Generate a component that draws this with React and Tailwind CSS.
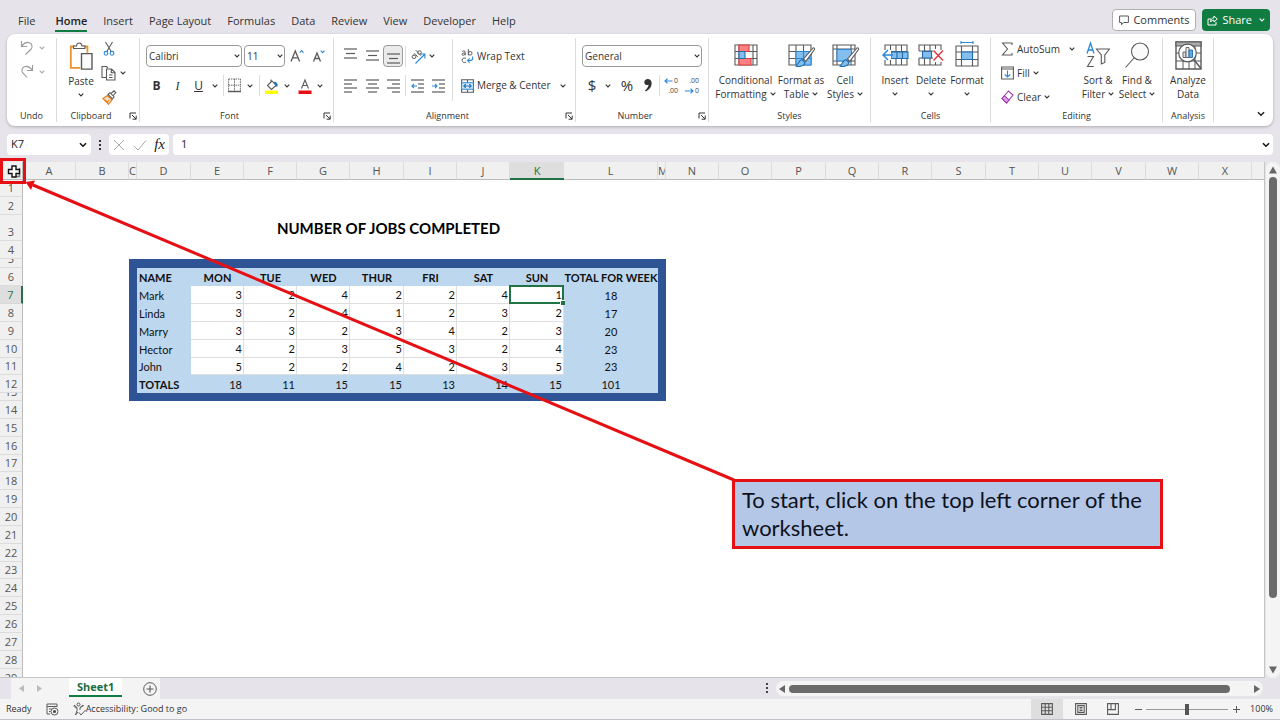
import { useState } from 'react';
import clsx from 'clsx';

const TABS = ['File', 'Home', 'Insert', 'Page Layout', 'Formulas', 'Data', 'Review', 'View', 'Developer', 'Help'];

const COLUMNS = [
  ['A', 53], ['B', 53], ['C', 8], ['D', 54], ['E', 53], ['F', 53], ['G', 53], ['H', 54],
  ['I', 53], ['J', 53], ['K', 54], ['L', 94], ['M', 8], ['N', 53], ['O', 53], ['P', 54],
  ['Q', 53], ['R', 53], ['S', 54], ['T', 53], ['U', 53], ['V', 54], ['W', 53], ['X', 53],
];

const ROW_HEIGHTS = [
  17, 18, 26, 18, 9, 18, 18, 18, 18, 18, 17, 18, 8, 18, 18, 18, 17, 18, 18, 18, 18, 18, 17, 18, 18, 18, 18, 18, 18,
];

const DAYS = ['MON', 'TUE', 'WED', 'THUR', 'FRI', 'SAT', 'SUN'];

const WORKERS = [
  { name: 'Mark', jobs: [3, 2, 4, 2, 2, 4, 1] },
  { name: 'Linda', jobs: [3, 2, 4, 1, 2, 3, 2] },
  { name: 'Marry', jobs: [3, 3, 2, 3, 4, 2, 3] },
  { name: 'Hector', jobs: [4, 2, 3, 5, 3, 2, 4] },
  { name: 'John', jobs: [5, 2, 2, 4, 2, 3, 5] },
];

const sum = (list) => list.reduce((a, b) => a + b, 0);

/* ---------- icons ---------- */

function Svg({ w = 16, h = 16, children, className }) {
  return (
    <svg width={w} height={h} viewBox={`0 0 ${w} ${h}`} fill="none" stroke="#5a5a5a" strokeWidth="1.1" aria-hidden="true" className={clsx('shrink-0', className)}>
      {children}
    </svg>
  );
}

function Chevron({ size = 6, color = '#333', width = 1.1 }) {
  return (
    <svg width={size} height={size} viewBox="0 0 6 6" fill="none" stroke={color} strokeWidth={width} aria-hidden="true" className="shrink-0">
      <path d="M0.7 1.7 3 4 5.3 1.7" />
    </svg>
  );
}

const UndoIcon = () => (
  <Svg className="opacity-60"><path d="M2.5 1v5.5H8M2.8 6.2C5 3 8 1.8 10.5 2.8c3 1.2 3.3 4.6 1.2 6.7L6.5 14.5" /></Svg>
);

const RedoIcon = () => (
  <Svg className="opacity-60"><path d="M13.5 1v5.5H8M13.2 6.2C11 3 8 1.8 5.5 2.8c-3 1.2-3.3 4.6-1.2 6.7L8 13.5" /></Svg>
);

const PasteIcon = () => (
  <Svg w={24} h={28}>
    <path d="M6 4.5H1.8v21.3h9.5M14 4.5h4.4v6.3" stroke="#e8912d" strokeWidth="1.8" />
    <path d="M4.5 6.5V4h3c.3-4 5-4 5.4 0h3v2.5z" fill="#fff" />
    <path d="M12.5 11.6h10.500v15.500H12.500z" fill="#fafafa" strokeWidth="1.400" />
  </Svg>
);

const CutIcon = () => (
  <Svg w={12} h={16}>
    <path d="M2.500 1l6 10M9.500 1l-6 10" />
    <circle cx="3" cy="12.300" r="1.900" stroke="#2b88d8" />
    <circle cx="9" cy="12.300" r="1.900" stroke="#2b88d8" />
  </Svg>
);

const CopyIcon = () => (
  <Svg w={15} h={16}>
    <path d="M5 12.500H1V1.500h4.500l1.500 1.500" />
    <path d="M5.500 4h5l3.500 3.500V15H5.500zM10.300 4v3.700H14M8 10h3.500M8 12.500h3.500" />
  </Svg>
);

const BrushIcon = () => (
  <Svg w={15} h={15}>
    <path d="M1 8.500l4.500-3 4.500 4.500-3.500 4.300z" fill="#fbe0bf" stroke="#e07b1a" />
    <path d="M3 10l2 2M5 13l2-3" stroke="#e07b1a" />
    <path d="M6 4.500l2-1.800 4 4L10.500 9zM9 3.500l3-2.700 1.800 1.700L11.300 5.500" />
  </Svg>
);

const LauncherIcon = () => (
  <Svg w={8} h={8}><path d="M7 1H1v5.500M3 3l4 4M7.200 3.600v3.600H3.600" strokeWidth="1" stroke="#333" /></Svg>
);

const GrowFontIcon = () => (
  <Svg w={15} h={16}>
    <path d="M1 13.500L5.300 3l4.300 10.500M2.600 9.800h5.400" strokeWidth="1.300" />
    <path d="M9.700 4.600L11.600 2.600l1.900 2" stroke="#2b88d8" />
  </Svg>
);

const ShrinkFontIcon = () => (
  <Svg w={15} h={16}>
    <path d="M1.500 13.500L5 5l3.500 8.500M2.800 10.500h4.400" strokeWidth="1.300" />
    <path d="M8.700 2.600L10.600 4.600l1.900-2" stroke="#2b88d8" />
  </Svg>
);

const BordersIcon = () => (
  <Svg w={13} h={15}>
    <path d="M.6 1h12M.6 1v12M12.400 1v12M6.500 1v12M.6 7.200h12" strokeWidth=".9" strokeDasharray="1.500 .8" />
    <path d="M0 13.500h13" strokeWidth="1.500" />
  </Svg>
);

const FillColorIcon = () => (
  <Svg w={14} h={16}>
    <path d="M6 1.500v3M2.500 7.500L7 3l4 4.500L6.500 11.500z" />
    <path d="M9 4.500c2 0 3 1.500 2.800 4" stroke="#1f6fb2" strokeWidth="1.700" />
    <path d="M0 12.500h13V16H0z" fill="#ffff00" stroke="none" />
  </Svg>
);

const FontColorIcon = () => (
  <Svg w={14} h={16}>
    <path d="M3.500 10.500L7 2l3.500 8.500M4.700 7.500h4.600" />
    <path d="M.5 12.500h13V16H.5z" fill="#e60f14" stroke="none" />
  </Svg>
);

/* horizontal bars, each one [x1, x2, y] */
function Bars({ lines, w = 13, h = 14, children }) {
  return (
    <Svg w={w} h={h}>
      {lines.map(([a, b, y]) => <path key={y} d={`M${a} ${y}H${b}`} strokeWidth="1.200" />)}
      {children}
    </Svg>
  );
}

const OrientationIcon = () => (
  <Svg w={15} h={15}>
    <path d="M4.500 14.500L13.500 5.500M9.500 5h4.400v4.400" stroke="#2b88d8" />
    <ellipse cx="3" cy="7.800" rx="1.900" ry="1.700" strokeWidth="1" />
    <path d="M2.500 5.200c1-.8 1.600-.3 2.300.5l2 2.200M4.800 1.200l5 5.500" strokeWidth="1" />
    <ellipse cx="8.500" cy="3.500" rx="1.800" ry="1.800" strokeWidth="1" />
  </Svg>
);

const WrapIcon = () => (
  <Svg w={13} h={16}>
    <path d="M1.200 3.500c1.500-1 3-.7 3 .8v3M4.200 5c-2 0-3.200.3-3.200 1.300 0 1.300 2.500 1.200 3.200-.3M7.300 1v6.300" strokeWidth="1" />
    <circle cx="9.200" cy="5.300" r="1.800" strokeWidth="1" />
    <path d="M5 10.300c-2.500-1-3.800.3-3.800 2s1.500 2.900 3.800 1.900" strokeWidth="1" />
    <path d="M11.500 8.500c1 3-.5 4.300-4.500 4M8.700 10.300L6.500 12.500l2.200 2.200" stroke="#2b88d8" />
  </Svg>
);

const MergeIcon = () => (
  <Svg w={13} h={14}>
    <path d="M.6.700h11.800v12.600H.6zM6.500.7v3M6.500 10.500v3" />
    <path d="M.6 3.700h11.800v6.600H.6z" fill="#d5eafa" stroke="#2b88d8" />
    <path d="M3 7h7M4.700 5.200L2.800 7l1.900 1.800M8.300 5.200L10.200 7 8.300 8.800" stroke="#1f6fb2" />
  </Svg>
);

function DecimalIcon({ increase }) {
  return (
    <span className="relative flex h-5 w-[14px] flex-col items-end text-[7px] leading-[10px] text-[#444]">
      <span>{increase ? '0' : '.00'}</span>
      <span>{increase ? '.00' : '0'}</span>
      <svg width="9" height="6" viewBox="0 0 9 6" fill="none" stroke="#2b88d8" strokeWidth="1.200" className={clsx('absolute left-0', increase ? 'top-[2px]' : 'bottom-[2px]')} aria-hidden="true">
        <path d={increase ? 'M8.500 3H1M3.500.6L1 3l2.500 2.400' : 'M0 3h8M5.500.6L8 3 5.500 5.400'} />
      </svg>
    </span>
  );
}

const GRID_24 = 'M1 1h22v20H1zM1 7.500h22M1 14h22M6.500 1v20M12 1v20M17.500 1v20';

const PaintTip = () => (
  <g>
    <path d="M25 7L15.500 18l2.300 2.300L26.500 8.500c.5-1.200-.7-2.200-1.500-1.500z" fill="#fff" />
    <path d="M7.500 25c2.500 0 2.500-5.500 6.500-6.500l3 3c-.5 3.500-5.500 4.800-9.500 3.500z" fill="#83beec" stroke="#1f6fb2" />
  </g>
);

const ConditionalIcon = () => (
  <Svg w={24} h={28}>
    <path d="M1 4h22v20H1zM1 10.500h22M1 17.500h22M5 4v20M19 4v20" />
    <path d="M5 4h10v6.500H5zM5 17.500h12V24H5z" fill="#ff8083" stroke="#e03c40" />
    <path d="M5 10.500h6v7H5z" fill="#83beec" stroke="#1f6fb2" />
  </Svg>
);

const FormatTableIcon = () => (
  <Svg w={27} h={28}>
    <path d="M1 4h22v20H1zM1 10.500h22M1 17.500h22M8 4v20M15.500 4v20" />
    <path d="M8 10.500h15V24H8z" fill="#83beec" stroke="#2b88d8" strokeWidth="1" />
    <path d="M8 17.500h15M15.500 10.500V24" stroke="#2b88d8" />
    <PaintTip />
  </Svg>
);

const CellStylesIcon = () => (
  <Svg w={27} h={28}>
    <path d="M1 4h22v20H1zM1 8h22M1 20h22M5 4v20M19 4v20" />
    <path d="M5 8.500h14.500V20H5z" fill="#83beec" stroke="#2b88d8" />
    <PaintTip />
  </Svg>
);

const InsertCellsIcon = () => (
  <Svg w={27} h={28}>
    <g transform="translate(2 3)"><path d={GRID_24} /></g>
    <path d="M9 11h17v6.500H9z" fill="#83beec" stroke="#1f6fb2" />
    <path d="M15 11v6.500M20.500 11v6.500" stroke="#1f6fb2" />
    <path d="M0 9h9v10H0z" fill="#fff" stroke="none" />
    <path d="M11 14H1M6 9l-5 5 5 5" stroke="#2b88d8" strokeWidth="1.500" />
  </Svg>
);

const DeleteCellsIcon = () => (
  <Svg w={26} h={28}>
    <g transform="translate(0 3)"><path d="M1 7V1h22v5M1 7h14M1 14v7h22v-3M1 14h14M6.500 1v6M12 1v6M17.500 1v4M6.500 14v7M12 14v7M17.500 18v3" /></g>
    <path d="M4.500 10.500h9V17h-9z" fill="#83beec" stroke="#1f6fb2" />
    <path d="M15.500 9.500l9.500 10M25 9.500l-9.500 10" stroke="#e8363b" strokeWidth="1.400" />
  </Svg>
);

const FormatCellsIcon = () => (
  <Svg w={24} h={28}>
    <path d="M1 5h22v20H1zM1 11h22M1 18.500h22M6.500 5v20M17.500 5v20" />
    <path d="M6.500 11h11v7.500h-11z" fill="#83beec" stroke="#1f6fb2" />
    <path d="M6 1.500h12M6 0v3M18 0v3" stroke="#2b88d8" />
  </Svg>
);

const SigmaIcon = () => (
  <Svg w={12} h={14}><path d="M11 3V1H1.500l5 6-5 6H11v-2" /></Svg>
);

const FillIcon = () => (
  <Svg w={13} h={14}>
    <path d="M.6 1h11.800v12H.6zM.6 3h11.800" />
    <path d="M6.500 4.500v6.500M3.800 8.500L6.500 11l2.700-2.500" stroke="#2b88d8" />
  </Svg>
);

const ClearIcon = () => (
  <Svg w={13} h={14}>
    <path d="M1 8.500L7.500 1l4.500 4L5.500 13z" fill="#fff" stroke="#a23bb0" />
    <path d="M1 8.500L3.500 5.700 8 10l-2.500 3z" fill="#dca5e4" stroke="#a23bb0" />
  </Svg>
);

const SortIcon = () => (
  <Svg w={24} h={28}>
    <path d="M1 12.500L4.500 2 8 12.500M2.200 9h4.600" stroke="#2b88d8" strokeWidth="1.300" />
    <path d="M1.500 15.500h6L1.500 25.500h6.300" />
    <path d="M10.500 8h13l-4.700 6v7.500l-3.500 1.500V14z" />
  </Svg>
);

const FindIcon = () => (
  <Svg w={26} h={28}><circle cx="16" cy="10.500" r="8.500" fill="#fafafa" /><path d="M10 17L1.500 26.500" /></Svg>
);

const AnalyzeIcon = () => (
  <Svg w={27} h={29}>
    <path d="M1 1h25v27H1z" strokeWidth="1.400" />
    <path d="M1 1h25v4H1z" fill="#aaa" />
    <path d="M1 12h25M1 20h25M8 5v23M14 5v23M20 5v23" strokeWidth="1" />
    <circle cx="12.500" cy="12" r="8.800" fill="#fff" strokeWidth="1.200" />
    <path d="M18.700 18.500l7.300 9" strokeWidth="1.500" />
    <path d="M8 11h3v5.500H8z" fill="#ddd" strokeWidth=".9" />
    <path d="M11 6.500h3v10h-3z" fill="#eee" strokeWidth=".9" />
    <path d="M14 9h3.500v7.500H14z" fill="#5aa9e6" stroke="#1f6fb2" strokeWidth=".9" />
  </Svg>
);

/* ---------- ribbon pieces ---------- */

function IconButton({ label, className, children }) {
  return (
    <button type="button" aria-label={label} className={clsx('flex shrink-0 items-center justify-center', className)}>
      {children}
    </button>
  );
}

function Separator({ className }) {
  return <span className={clsx('w-px shrink-0 bg-[#dcdcdc]', className ?? 'h-[21px]')} />;
}

function Group({ title, width, launcher, children }) {
  return (
    <section aria-label={title} className={clsx('flex shrink-0 flex-col border-r border-[#dcdcdc]', width)}>
      <div className="h-[74px]">{children}</div>
      <div className={clsx('relative text-center text-[9px] leading-3', launcher && 'pr-[14px]')}>
        {title}
        {launcher && (
          <button type="button" aria-label={`${title} settings`} className="absolute right-0.5 top-0.5"><LauncherIcon /></button>
        )}
      </div>
    </section>
  );
}

function RibbonSelect({ label, value, width }) {
  return (
    <span className={clsx('relative block h-[22px] shrink-0', width)}>
      <select aria-label={label} defaultValue={value} className="size-full appearance-none rounded border border-[#9a9a9a] bg-white pl-[2px] text-[10px] text-[#333]">
        <option>{value}</option>
      </select>
      <span className="pointer-events-none absolute right-[2px] top-2"><Chevron /></span>
    </span>
  );
}

function BigButton({ icon, lines, width, chevron }) {
  return (
    <button type="button" className={clsx('flex shrink-0 flex-col items-center pt-[3px]', width)}>
      <span className="flex h-7 items-center">{icon}</span>
      <span className="mt-1 whitespace-nowrap leading-[14px]">
        {lines[0]}
        <span className="flex h-[14px] items-center justify-center gap-[3px]">
          {lines[1]}
          {chevron && <Chevron />}
        </span>
      </span>
    </button>
  );
}

function Ribbon() {
  return (
    <div className="mx-[7px] flex h-[92px] shrink-0 rounded-lg bg-white py-1 text-[10px] text-[#333] shadow-[0_1px_3px_rgba(0,0,0,0.25)]">
      <Group title="Undo" width="w-[50px]">
        <div className="flex flex-col gap-2 pl-3 pt-[2px]">
          <IconButton label="Undo" className="h-4 gap-1 self-start"><UndoIcon /><Chevron color="#aaa" /></IconButton>
          <IconButton label="Redo" className="h-4 gap-1 self-start"><RedoIcon /><Chevron color="#aaa" /></IconButton>
        </div>
      </Group>

      <Group title="Clipboard" width="w-[83px]" launcher>
        <div className="flex gap-1 pl-2">
          <button type="button" className="flex w-8 flex-col items-center pt-1">
            <PasteIcon />
            <span className="my-1 leading-[14px]">Paste</span>
            <Chevron />
          </button>
          <div className="flex flex-col gap-2 pt-[3px]">
            <IconButton label="Cut" className="h-4 w-4"><CutIcon /></IconButton>
            <IconButton label="Copy" className="h-4 gap-1"><CopyIcon /><Chevron /></IconButton>
            <IconButton label="Format Painter" className="h-4 w-4"><BrushIcon /></IconButton>
          </div>
        </div>
      </Group>

      <Group title="Font" width="w-[194px]" launcher>
        <div className="flex flex-col gap-2 pl-[6px] pt-[7px]">
          <div className="flex items-center gap-[2px]">
            <RibbonSelect label="Font" value="Calibri" width="w-[96px]" />
            <RibbonSelect label="Font size" value="11" width="w-[41px]" />
            <IconButton label="Increase font size" className="w-5"><GrowFontIcon /></IconButton>
            <IconButton label="Decrease font size" className="w-5"><ShrinkFontIcon /></IconButton>
          </div>
          <div className="flex h-[21px] items-center text-[12px]">
            <IconButton label="Bold" className="w-[21px] font-bold">B</IconButton>
            <IconButton label="Italic" className="w-[21px] font-['Liberation_Serif'] italic">I</IconButton>
            <IconButton label="Underline" className="w-[21px] underline">U</IconButton>
            <IconButton label="Underline style" className="w-[11px]"><Chevron /></IconButton>
            <Separator className="mx-[3px] h-[21px]" />
            <IconButton label="Borders" className="w-[15px]"><BordersIcon /></IconButton>
            <IconButton label="Border style" className="w-4"><Chevron /></IconButton>
            <Separator className="ml-px mr-1 h-[21px]" />
            <IconButton label="Fill color" className="w-[15px]"><FillColorIcon /></IconButton>
            <IconButton label="Fill color list" className="w-4"><Chevron /></IconButton>
            <IconButton label="Font color" className="ml-[2px] w-[15px]"><FontColorIcon /></IconButton>
            <IconButton label="Font color list" className="w-4"><Chevron /></IconButton>
          </div>
        </div>
      </Group>

      <Group title="Alignment" width="w-[242px]" launcher>
        <div className="flex">
          <div className="flex flex-col gap-2 pl-[6px] pt-[7px]">
            <div className="flex h-[22px] items-center">
              <IconButton label="Top align" className="w-[21px] pb-1"><Bars lines={[[0, 13, 2], [2, 11, 6.5], [0, 13, 11]]} /></IconButton>
              <IconButton label="Middle align" className="w-[22px]"><Bars lines={[[0, 13, 2], [2, 11, 6.5], [0, 13, 11]]} /></IconButton>
              <IconButton label="Bottom align" className="h-[22px] w-5 rounded border border-[#999] bg-[#ebebeb] pt-1"><Bars lines={[[0, 13, 3], [2, 11, 7.5], [0, 13, 12]]} /></IconButton>
              <Separator className="ml-[2px] mr-1 h-[21px]" />
              <IconButton label="Orientation" className="w-4"><OrientationIcon /></IconButton>
              <IconButton label="Orientation list" className="w-3"><Chevron /></IconButton>
            </div>
            <div className="flex h-[21px] items-center">
              <IconButton label="Align left" className="w-[21px]"><Bars lines={[[0, 13, 1], [0, 8, 5], [0, 13, 9], [0, 8, 13]]} /></IconButton>
              <IconButton label="Center" className="w-[22px]"><Bars lines={[[0, 13, 1], [2, 11, 5], [0, 13, 9], [2, 11, 13]]} /></IconButton>
              <IconButton label="Align right" className="w-5"><Bars lines={[[0, 13, 1], [5, 13, 5], [0, 13, 9], [5, 13, 13]]} /></IconButton>
              <Separator className="ml-[2px] mr-[3px] h-[21px]" />
              <IconButton label="Decrease indent" className="w-4">
                <Bars lines={[[0, 13, 1], [7, 13, 5], [7, 13, 9], [0, 13, 13]]}><path d="M6 7H1M3 5L1 7l2 2" stroke="#2b88d8" /></Bars>
              </IconButton>
              <IconButton label="Increase indent" className="ml-[5px] w-4">
                <Bars lines={[[0, 13, 1], [7, 13, 5], [7, 13, 9], [0, 13, 13]]}><path d="M0 7h5M3 5l2 2-2 2" stroke="#2b88d8" /></Bars>
              </IconButton>
            </div>
          </div>
          <Separator className="ml-[6px] mt-px h-[62px]" />
          <div className="flex flex-col gap-2 pl-2 pt-[7px]">
            <button type="button" className="flex h-[22px] items-center gap-[3px]"><WrapIcon />Wrap Text</button>
            <button type="button" className="flex h-[21px] items-center gap-[3px] whitespace-nowrap">
              <MergeIcon />Merge &amp; Center<span className="ml-[6px]"><Chevron /></span>
            </button>
          </div>
        </div>
      </Group>

      <Group title="Number" width="w-[133px]" launcher>
        <div className="flex flex-col gap-2 pl-[6px] pt-[7px]">
          <RibbonSelect label="Number format" value="General" width="w-[120px]" />
          <div className="flex h-[21px] items-center text-[15px]">
            <IconButton label="Accounting format" className="w-5">$</IconButton>
            <IconButton label="Accounting list" className="w-3"><Chevron /></IconButton>
            <IconButton label="Percent" className="ml-1 w-[18px]">%</IconButton>
            <IconButton label="Comma style" className="ml-[3px] w-[18px]">
              <svg width="8" height="13" viewBox="0 0 8 13" fill="#333" aria-hidden="true"><path d="M3.800 0C1.700 0 .3 1.400.3 3.200c0 1.700 1.200 2.900 2.900 2.900.6 0 1-.1 1.400-.3C4.300 8 3 10 1 11.500l.9 1C5.500 10.500 7.700 7.500 7.700 4.200 7.700 1.700 6.100 0 3.800 0z" /></svg>
            </IconButton>
            <Separator className="mx-[2px] h-[21px]" />
            <IconButton label="Increase decimal" className="w-[18px]"><DecimalIcon increase /></IconButton>
            <IconButton label="Decrease decimal" className="ml-[3px] w-[18px]"><DecimalIcon /></IconButton>
          </div>
        </div>
      </Group>

      <Group title="Styles" width="w-[162px]">
        <div className="flex pl-[5px]">
          <BigButton icon={<ConditionalIcon />} lines={['Conditional', 'Formatting']} width="w-[63px]" chevron />
          <BigButton icon={<FormatTableIcon />} lines={['Format as', 'Table']} width="w-[48px]" chevron />
          <BigButton icon={<CellStylesIcon />} lines={['Cell', 'Styles']} width="w-[40px]" chevron />
        </div>
      </Group>

      <Group title="Cells" width="w-[120px]">
        <div className="flex pl-[6px]">
          <BigButton icon={<InsertCellsIcon />} lines={['Insert', '']} width="w-9" chevron />
          <BigButton icon={<DeleteCellsIcon />} lines={['Delete', '']} width="w-9" chevron />
          <BigButton icon={<FormatCellsIcon />} lines={['Format', '']} width="w-9" chevron />
        </div>
      </Group>

      <Group title="Editing" width="w-[172px]">
        <div className="flex pl-[10px]">
          <div className="flex w-[78px] flex-col gap-2 pt-[3px]">
            <button type="button" className="flex h-4 items-center gap-1"><SigmaIcon />AutoSum<span className="ml-auto mr-1"><Chevron /></span></button>
            <button type="button" className="flex h-4 items-center gap-[3px]"><FillIcon />Fill<Chevron /></button>
            <button type="button" className="flex h-4 items-center gap-[3px]"><ClearIcon />Clear<Chevron /></button>
          </div>
          <BigButton icon={<SortIcon />} lines={['Sort &', 'Filter']} width="w-[38px]" chevron />
          <BigButton icon={<FindIcon />} lines={['Find &', 'Select']} width="w-[40px]" chevron />
        </div>
      </Group>

      <Group title="Analysis" width="w-[51px]">
        <BigButton icon={<AnalyzeIcon />} lines={['Analyze', 'Data']} width="w-[50px]" />
      </Group>

      <button type="button" aria-label="Collapse ribbon" className="ml-auto mr-2 self-end pb-1"><Chevron size={8} color="#222" /></button>
    </div>
  );
}

function MenuBar() {
  return (
    <header className="flex h-[34px] shrink-0 items-center pl-[18px] pr-[10px] pt-[6px] text-[#333]">
      <nav className="flex flex-1 items-center gap-4 text-[11px]">
        {TABS.map((tab) => (
          <a
            key={tab}
            href="#"
            className={clsx('whitespace-nowrap border-b-2 pt-[3px] leading-[18px] first:mr-1', tab === 'Home' ? 'border-[#107c41] font-semibold text-[#222]' : 'border-transparent')}
          >
            {tab}
          </a>
        ))}
      </nav>
      <button type="button" className="mr-[6px] flex h-[22px] items-center gap-1 rounded border border-[#b0b0b0] bg-white px-[6px] text-[11px]">
        <Svg w={10} h={11}><path d="M.6 1h8.800v6.500H4.500L2.500 9.800V7.500H.6z" strokeWidth="1" /></Svg>
        Comments
      </button>
      <button type="button" className="flex h-[22px] items-center gap-1 rounded bg-[#107c41] px-[5px] text-[11px] text-white">
        <Svg w={11} h={12}><path d="M4 5H1v6h8V8M3.500 8c.2-3 1.500-4 3.500-4.200V2l3.300 3L7 8V6.200C5.500 6.200 4.500 6.700 3.500 8z" stroke="#fff" strokeWidth="1" /></Svg>
        Share
        <span className="ml-[3px]"><Chevron color="#fff" /></span>
      </button>
    </header>
  );
}

function FormulaBar() {
  return (
    <div className="mt-2 flex h-[21px] shrink-0 items-center px-[7px] text-[11px] text-[#222]">
      <div className="flex h-full w-[84px] shrink-0 items-center rounded bg-white pr-1">
        <input aria-label="Name box" defaultValue="K7" className="min-w-0 flex-1 bg-transparent pl-1 outline-none" />
        <Chevron size={8} color="#111" />
      </div>
      <Svg w={2} h={12} className="mx-2"><path d="M1 1v2M1 5v2M1 9v2" stroke="#333" strokeWidth="2" /></Svg>
      <div className="flex h-full w-[60px] shrink-0 items-center justify-between rounded bg-white px-1">
        <IconButton label="Cancel"><Svg w={12} h={12}><path d="M1 1l10 10M11 1L1 11" stroke="#aaa" strokeWidth="1" /></Svg></IconButton>
        <IconButton label="Enter"><Svg w={14} h={12}><path d="M1 7l4 4L13 1.500" stroke="#aaa" strokeWidth="1" /></Svg></IconButton>
        <IconButton label="Insert function" className="font-['Liberation_Serif'] text-[15px] italic">fx</IconButton>
      </div>
      <div className="ml-1 flex h-full min-w-0 flex-1 items-center rounded bg-white pr-[3px]">
        <input aria-label="Formula" defaultValue="1" className="min-w-0 flex-1 bg-transparent pl-2 outline-none" />
        <Chevron size={8} color="#111" />
      </div>
    </div>
  );
}

/* ---------- worksheet ---------- */

const BLUE = 'bg-[#bdd7ee]';
const NAVY = 'bg-[#2f5496]';

function rowCells(row) {
  if (row === 3) {
    return (
      <>
        <td colSpan={3} />
        <td colSpan={9} className="pr-[18px] pt-[2px] text-center text-[15px] font-bold leading-5 text-black">NUMBER OF JOBS COMPLETED</td>
        <td colSpan={13} />
      </>
    );
  }
  if (row === 5 || row === 13) {
    return <><td colSpan={2} /><td colSpan={11} className={NAVY} /><td colSpan={12} /></>;
  }
  if (row < 6 || row > 12) return <td colSpan={25} />;

  const worker = WORKERS[row - 7];
  let cells;
  if (row === 6) {
    cells = (
      <>
        <th scope="col" className={clsx(BLUE, 'pl-[2px] text-left')}>NAME</th>
        {DAYS.map((d) => <th key={d} scope="col" className={BLUE}>{d}</th>)}
        <th scope="col" className={clsx(BLUE, 'whitespace-nowrap')}>TOTAL FOR WEEK</th>
      </>
    );
  } else if (row === 12) {
    cells = (
      <>
        <th scope="row" className={clsx(BLUE, 'pl-[2px] text-left')}>TOTALS</th>
        {DAYS.map((d, i) => <td key={d} className={clsx(BLUE, 'pr-[2px] text-right')}>{sum(WORKERS.map((w) => w.jobs[i]))}</td>)}
        <td className={clsx(BLUE, 'text-center')}>{sum(WORKERS.map((w) => sum(w.jobs)))}</td>
      </>
    );
  } else {
    cells = (
      <>
        <th scope="row" className={clsx(BLUE, 'pl-[2px] text-left font-normal')}>{worker.name}</th>
        {worker.jobs.map((n, i) => (
          <td key={DAYS[i]} className="relative border-b border-r border-[#dedede] bg-white pr-px text-right">
            {n}
            {row === 7 && i === 6 && (
              <span className="absolute -inset-px z-10 border-2 border-[#217346]">
                <span className="absolute -bottom-[3px] -right-[3px] size-[5px] border-l border-t border-white bg-[#217346]" />
              </span>
            )}
          </td>
        ))}
        <td className={clsx(BLUE, 'text-center')}>{sum(worker.jobs)}</td>
      </>
    );
  }
  return <><td colSpan={2} /><td className={NAVY} />{cells}<td className={NAVY} /><td colSpan={12} /></>;
}

function Sheet() {
  return (
    <div className="min-w-0 flex-1 overflow-hidden border-b border-r border-[#c4c4c4] bg-white">
      <table className="w-full table-fixed border-separate border-spacing-0 font-['Lato',sans-serif] text-[11px] leading-[13px] text-[#111] [&_td]:py-0 [&_th]:py-0">
        <colgroup>
          <col className="w-[23px]" />
          {COLUMNS.map(([name, width]) => <col key={name} style={{ width }} />)}
          <col />
        </colgroup>
        <thead>
          <tr className="h-[18px] font-['Open_Sans',sans-serif] text-[#555]">
            <td className="border-b border-r border-[#bbb] bg-[#f0f0f0]" />
            {COLUMNS.map(([name]) => (
              <th
                key={name}
                scope="col"
                className={clsx(
                  'overflow-hidden whitespace-nowrap border-b p-0 font-normal',
                  name === 'K' ? 'border-b-2 border-[#217346] bg-[#dedede] text-[#217346]' : 'border-r border-b-[#bbb] border-r-[#dcdcdc] bg-[#f0f0f0]',
                )}
              >
                {name}
              </th>
            ))}
            <td className="border-b border-[#bbb] bg-[#f0f0f0]" />
          </tr>
        </thead>
        <tbody>
          {ROW_HEIGHTS.map((height, i) => {
            const row = i + 1;
            return (
              <tr key={row} style={{ height }}>
                <th
                  scope="row"
                  className={clsx(
                    "border-b border-r p-0 font-['Open_Sans',sans-serif] font-normal",
                    row === 7 ? 'border-r-2 border-b-[#d8d8d8] border-r-[#217346] bg-[#dedede] text-[#217346]' : 'border-b-[#dcdcdc] border-r-[#bbb] bg-[#f0f0f0] text-[#555]',
                  )}
                >
                  <div className="flex items-end justify-center overflow-hidden leading-4" style={{ height: height - 1 }}>{row}</div>
                </th>
                {rowCells(row)}
              </tr>
            );
          })}
        </tbody>
      </table>
    </div>
  );
}

function VerticalScroll() {
  return (
    <div className="ml-px flex w-[14px] shrink-0 flex-col items-center rounded-full bg-[#f4f4f4] py-1">
      <IconButton label="Scroll up"><Svg w={8} h={8}><path d="M4 .5L8 7.500H0z" fill="#666" stroke="none" /></Svg></IconButton>
      <div className="mt-[3px] w-2 flex-1"><div className="h-[86%] rounded-full bg-[#6b6b6b]" /></div>
      <IconButton label="Scroll down"><Svg w={8} h={8}><path d="M4 7.500L0 .5h8z" fill="#666" stroke="none" /></Svg></IconButton>
    </div>
  );
}

function SheetTabs() {
  return (
    <div className="flex h-[21px] shrink-0 items-center pr-[17px]">
      <div className="ml-[11px] flex h-full items-center bg-[#f4f4f4] pr-px">
        <IconButton label="Previous sheet" className="w-5"><Svg w={5} h={7}><path d="M5 0v7L0 3.500z" fill="#bbb" stroke="none" /></Svg></IconButton>
        <IconButton label="Next sheet" className="w-4"><Svg w={5} h={7}><path d="M0 0v7l5-3.500z" fill="#bbb" stroke="none" /></Svg></IconButton>
        <button type="button" className="-mt-[2px] ml-[22px] h-[19px] border-b-2 border-[#107c41] bg-white px-2 text-[11px] font-bold leading-4 text-[#1c6b40]">Sheet1</button>
        <IconButton label="New sheet" className="ml-[19px] w-[18px]">
          <Svg w={14} h={14}><circle cx="7" cy="7" r="6.300" strokeWidth="1" /><path d="M7 3.500v7M3.500 7h7" /></Svg>
        </IconButton>
      </div>
      <div className="ml-auto flex h-full items-center gap-2">
        <Svg w={2} h={11}><path d="M1 0v2M1 4v2M1 8v2" stroke="#444" strokeWidth="2" /></Svg>
        <div className="flex h-[15px] w-[487px] items-center rounded-full bg-[#f4f4f4] px-[3px]">
          <IconButton label="Scroll left" className="mr-[3px]"><Svg w={7} h={8}><path d="M6 0v8L0 4z" fill="#666" stroke="none" /></Svg></IconButton>
          <div className="flex-1"><div className="h-2 w-[95%] rounded-full bg-[#6b6b6b]" /></div>
          <IconButton label="Scroll right"><Svg w={7} h={8}><path d="M1 0v8l6-4z" fill="#666" stroke="none" /></Svg></IconButton>
        </div>
      </div>
    </div>
  );
}

function StatusBar() {
  const [zoom, setZoom] = useState(50);
  return (
    <footer className="flex h-[21px] shrink-0 items-center border-b border-[#c0c0c8] bg-[#f4f4f4] pl-[6px] pr-[7px] text-[9px] text-[#333]">
      <span>Ready</span>
      <IconButton label="Record macro" className="ml-[14px]">
        <Svg w={13} h={13}><path d="M4 11H1V1h10v3M1 3.500h10M3 6h2.500M3 8.500h1.500" strokeWidth="1" /><circle cx="8.500" cy="8.500" r="3.500" strokeWidth="1" /><circle cx="8.500" cy="8.500" r="1.500" fill="#444" stroke="none" /></Svg>
      </IconButton>
      <button type="button" className="ml-[14px] flex items-center">
        <Svg w={13} h={14}><circle cx="5.500" cy="2.500" r="1.500" strokeWidth="1" /><path d="M1 3l3 2.500v3L2.500 13 5 10M10 3L7 5.500V8M1 3.500c-.5.800 0 1.500 3 2.500M10 3c1 .8 0 1.500-2.500 2.500M6 10.500L8 13l4.500-5" strokeWidth="1" /></Svg>
        Accessibility: Good to go
      </button>
      <div className="ml-auto flex h-full items-center">
        <IconButton label="Normal view" className="h-full w-8 bg-[#dedede]"><Svg w={12} h={12}><path d="M.6.600h10.800v10.800H.6zM.6 4.200h10.800M.6 7.800h10.800M4.200.6v10.800M7.800.6v10.800" strokeWidth="1.100" /></Svg></IconButton>
        <IconButton label="Page layout view" className="ml-[2px] h-full w-8"><Svg w={12} h={12}><path d="M.6.600h10.800v10.800H.6zM2.800 2.600h6.400v6.800H2.800zM4.500 4.500h3M4.500 6h3M4.500 7.500h3" strokeWidth="1.100" /></Svg></IconButton>
        <IconButton label="Page break view" className="h-full w-8"><Svg w={12} h={12}><path d="M.6.600h10.800v10.800H.6zM4 .6v6M.6 6.600h7.800V.6" strokeWidth="1.100" /></Svg></IconButton>
        <IconButton label="Zoom out" className="ml-[3px] w-3"><Svg w={7} h={7}><path d="M0 3.500h7" strokeWidth="1" /></Svg></IconButton>
        <input
          type="range"
          aria-label="Zoom"
          value={zoom}
          onChange={(e) => setZoom(e.target.value)}
          className="mx-[2px] h-3 w-[82px] appearance-none bg-transparent [&::-webkit-slider-runnable-track]:h-px [&::-webkit-slider-runnable-track]:bg-[#999] [&::-webkit-slider-thumb]:-mt-[5px] [&::-webkit-slider-thumb]:h-[11px] [&::-webkit-slider-thumb]:w-1 [&::-webkit-slider-thumb]:appearance-none [&::-webkit-slider-thumb]:bg-[#555]"
        />
        <IconButton label="Zoom in" className="w-3"><Svg w={7} h={7}><path d="M0 3.500h7M3.500 0v7" strokeWidth="1" /></Svg></IconButton>
        <span className="ml-[8px]">100%</span>
      </div>
    </footer>
  );
}

/* tutorial call-out drawn over the sheet, pointing at the select-all corner */
function Callout() {
  return (
    <>
      <svg width="740" height="490" viewBox="0 0 740 490" className="pointer-events-none absolute left-0 top-0" aria-hidden="true">
        <path d="M33 185L734 480" stroke="#e60f14" strokeWidth="3" />
        <path d="M25.500 182L35 180.500 31 190z" fill="#e60f14" />
        <path d="M19.500 168v8.500H13" fill="none" stroke="#777" strokeWidth="1.500" />
        <path d="M12 166h4v3.500h3.500v4H16V177h-4v-3.500H8.500v-4H12z" fill="#fff" stroke="#111" strokeWidth="1.400" />
      </svg>
      <div className="pointer-events-none absolute left-0 top-[158px] h-[26px] w-[26px] border-[3px] border-[#e60f14]" />
      <p className="absolute left-[732px] top-[479px] w-[431px] border-[3px] border-[#e60f14] bg-[#b4c7e7] py-[4px] pl-[7px] font-['Lato',sans-serif] text-[22px] leading-[28px] text-[#0d1220]">
        To start, click on the top left corner of the worksheet.
      </p>
    </>
  );
}

function App() {
  return (
    <div className="relative flex h-screen flex-col overflow-hidden bg-[#e6e4ea] font-['Open_Sans',sans-serif]">
      <MenuBar />
      <Ribbon />
      <FormulaBar />
      <main className="mt-[7px] flex min-h-0 flex-1">
        <Sheet />
        <VerticalScroll />
      </main>
      <SheetTabs />
      <StatusBar />
      <Callout />
    </div>
  );
}

export default App;
